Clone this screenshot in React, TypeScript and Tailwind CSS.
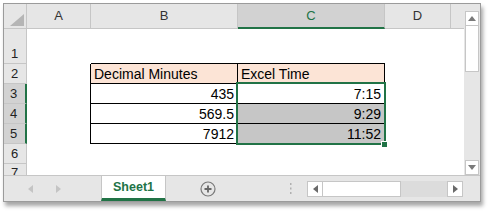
import React from "react";

const font = { fontFamily: '"Liberation Sans", Arial, sans-serif' };

const HDR = "bg-[#e6e6e6] border-r border-b border-[#c6c6c6]";
const HDR_SEL = "bg-[#d2d2d2] border-b border-[#c6c6c6]";

function ColHeader({ label, sel }: { label: string; sel?: boolean }) {
  return (
    <div
      className={
        sel
          ? "bg-[#d2d2d2] border-r border-[#c6c6c6] border-b-2 border-b-[#217346] flex items-center justify-center text-[13px] text-[#217346]"
          : `${HDR} flex items-center justify-center text-[13px] text-[#333]`
      }
    >
      {label}
    </div>
  );
}

function RowHeader({ n, sel }: { n: string; sel?: boolean }) {
  return (
    <div
      className={
        sel
          ? `${HDR_SEL} border-r-2 border-r-[#217346] flex items-end justify-center pr-[2px] text-[13px] leading-[18px] text-[#222]`
          : `${HDR} flex items-end justify-center pr-[1px] text-[13px] leading-[18px] text-[#222] overflow-hidden`
      }
    >
      {n}
    </div>
  );
}

export default function App() {
  return (
    <div className="w-[490px] h-[212px] bg-white pl-[3px] pt-[3px]" style={font}>
      <div className="w-[478px] h-[199px] border border-[#9b9b9b] bg-[#e6e6e6] flex flex-col shadow-[2px_4px_4px_rgba(0,0,0,0.35)]">
        {/* top area: grid + vertical scrollbar */}
        <div className="flex h-[171px]">
          <div className="relative w-[460px] grid grid-cols-[23px_64px_147px_147px_66px_13px] grid-rows-[25px_35px_20px_20px_20px_20px_20px_11px] bg-white overflow-hidden">
            {/* header row */}
            <div className={`${HDR} relative`}>
              <svg className="absolute right-[2px] bottom-[2px]" width="14" height="12" viewBox="0 0 14 12">
                <polygon points="14,0 14,12 0,12" fill="#b5b5b5" />
              </svg>
            </div>
            <ColHeader label="A" />
            <ColHeader label="B" />
            <ColHeader label="C" sel />
            <ColHeader label="D" />
            <div className="bg-[#e6e6e6] border-b border-[#c6c6c6]" />

            {/* row 1 */}
            <RowHeader n="1" />
            <div />
            <div className="border-b border-black" />
            <div className="border-b border-black" />
            <div />
            <div />

            {/* row 2 */}
            <RowHeader n="2" />
            <div className="border-r border-black" />
            <div className="border-r border-b border-black bg-[#fce4d6] flex items-end px-[3px] text-[14px] leading-[18px] text-black">
              Decimal Minutes
            </div>
            <div className="border-r border-b border-black bg-[#fce4d6] flex items-end px-[3px] text-[14px] leading-[18px] text-black">
              Excel Time
            </div>
            <div />
            <div />

            {/* row 3 */}
            <RowHeader n="3" sel />
            <div className="border-r border-black" />
            <div className="border-r border-b border-black flex items-end justify-end px-[3px] text-[14px] leading-[18px] text-black">
              435
            </div>
            <div className="border-r border-b border-black flex items-end justify-end px-[3px] text-[14px] leading-[18px] text-black">
              7:15
            </div>
            <div />
            <div />

            {/* row 4 */}
            <RowHeader n="4" sel />
            <div className="border-r border-black" />
            <div className="border-r border-b border-black flex items-end justify-end px-[3px] text-[14px] leading-[18px] text-black">
              569.5
            </div>
            <div className="border-r border-b border-black bg-[#c6c6c6] flex items-end justify-end px-[3px] text-[14px] leading-[18px] text-black">
              9:29
            </div>
            <div />
            <div />

            {/* row 5 */}
            <RowHeader n="5" sel />
            <div className="border-r border-black" />
            <div className="border-r border-b border-black flex items-end justify-end px-[3px] text-[14px] leading-[18px] text-black">
              7912
            </div>
            <div className="border-r border-b border-white bg-[#c6c6c6] flex items-end justify-end px-[3px] text-[14px] leading-[18px] text-black">
              11:52
            </div>
            <div />
            <div />

            {/* row 6 */}
            <RowHeader n="6" />
            <div />
            <div />
            <div />
            <div />
            <div />

            {/* row 7 */}
            <div className="bg-[#e6e6e6] border-r border-[#c6c6c6] flex justify-center pr-[1px] text-[13px] leading-[18px] text-[#222] overflow-hidden">
              7
            </div>
            <div />
            <div />
            <div />
            <div />
            <div />

            {/* selection overlay */}
            <div className="absolute left-[232px] top-[78px] w-[150px] h-[63px] border-2 border-[#217346] pointer-events-none" />
            <div className="absolute left-[377px] top-[137px] w-[7px] h-[7px] bg-[#217346] border border-white" />
          </div>

          {/* vertical scrollbar */}
          <div className="w-[16px] bg-[#e6e6e6] flex flex-col pt-[7px] px-[1px]">
            <div className="h-[15px] bg-white border border-[#c6c6c6] flex items-center justify-center">
              <svg width="8" height="5" viewBox="0 0 8 5">
                <polygon points="4,0 8,5 0,5" fill="#7a7a7a" />
              </svg>
            </div>
            <div className="h-[46px] bg-white border-x border-b border-[#c6c6c6]" />
            <div className="flex-1" />
            <div className="h-[15px] bg-white border border-[#c6c6c6] flex items-center justify-center">
              <svg width="8" height="5" viewBox="0 0 8 5">
                <polygon points="0,0 8,0 4,5" fill="#7a7a7a" />
              </svg>
            </div>
          </div>
        </div>

        {/* tab bar */}
        <div className="flex-1 flex items-stretch border-t border-[#c6c6c6] bg-[#e6e6e6]">
          <div className="w-[97px] flex items-center">
            <svg className="ml-[24px]" width="5" height="8" viewBox="0 0 5 8">
              <polygon points="5,0 5,8 0,4" fill="#c4c4c4" />
            </svg>
            <svg className="ml-[23px]" width="5" height="8" viewBox="0 0 5 8">
              <polygon points="0,0 0,8 5,4" fill="#c4c4c4" />
            </svg>
          </div>
          <div className="w-[65px] bg-white border-x border-[#c6c6c6] border-b-[3px] border-b-[#217346] flex items-center justify-center text-[12.5px] font-bold text-[#217346] -mt-[1px] border-t border-t-[#c6c6c6]">
            Sheet1
          </div>
          <div className="w-[84px] flex items-center">
            <svg className="ml-[34px]" width="16" height="16" viewBox="0 0 16 16">
              <circle cx="8" cy="8" r="7" fill="none" stroke="#7a7a7a" strokeWidth="1.2" />
              <path d="M8 4.5v7M4.5 8h7" stroke="#666" strokeWidth="1.8" />
            </svg>
          </div>
          <div className="w-[57px] flex items-center">
            <svg className="ml-[39px]" width="3" height="11" viewBox="0 0 3 11">
              <rect x="1" y="0" width="1.5" height="2" fill="#b0b0b0" />
              <rect x="1" y="4.5" width="1.5" height="2" fill="#b0b0b0" />
              <rect x="1" y="9" width="1.5" height="2" fill="#b0b0b0" />
            </svg>
          </div>
          <div className="flex items-center">
            <div className="h-[16px] w-[156px] flex bg-[#dcdcdc]">
              <div className="w-[16px] bg-white border border-[#c6c6c6] flex items-center justify-center">
                <svg width="5" height="8" viewBox="0 0 5 8">
                  <polygon points="5,0 5,8 0,4" fill="#6a6a6a" />
                </svg>
              </div>
              <div className="w-[78px] bg-white border-y border-r border-[#c6c6c6]" />
              <div className="flex-1" />
              <div className="w-[16px] bg-white border border-[#c6c6c6] flex items-center justify-center">
                <svg width="5" height="8" viewBox="0 0 5 8">
                  <polygon points="0,0 0,8 5,4" fill="#6a6a6a" />
                </svg>
              </div>
            </div>
          </div>
        </div>
      </div>
    </div>
  );
}
